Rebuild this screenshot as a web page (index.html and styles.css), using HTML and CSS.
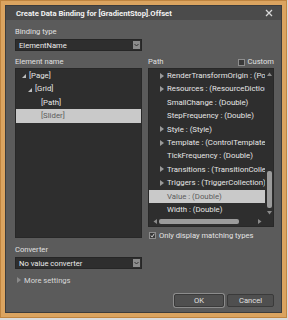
FILE: index.html
```html
<!DOCTYPE html>
<html>
<head>
<meta charset="utf-8">
<link rel="stylesheet" href="styles.css">
</head>
<body>
<div class="window">
  <div class="inner">
    <div class="titlebar">
      <span class="title">Create Data Binding for [GradientStop].Offset</span>
      <svg class="close" width="8" height="8" viewBox="0 0 8 8"><path d="M1 1L7 7M7 1L1 7" stroke="#d8d8d8" stroke-width="1.3"/></svg>
    </div>
    <div class="content">
      <div class="label first">Binding type</div>
      <div class="combo">
        <span>ElementName</span>
        <span class="drop"><svg width="5" height="4" viewBox="0 0 5 4"><path d="M0.5 1L2.5 3L4.5 1" stroke="#333" stroke-width="1" fill="none"/></svg></span>
      </div>
      <div class="cols">
        <div class="col">
          <div class="label">Element name</div>
          <div class="box tree">
            <div class="row l0"><span class="exp"></span>[Page]</div>
            <div class="row l1"><span class="exp"></span>[Grid]</div>
            <div class="row l2">[Path]</div>
            <div class="row l2 sel">[Slider]</div>
          </div>
        </div>
        <div class="col">
          <div class="label pathhead"><span>Path</span><span class="custom"><span class="cb"></span>Custom</span></div>
          <div class="box plist">
            <div class="prows">
              <div class="items">
                <div class="row p"><span class="arr"></span>RenderTransformOrigin : (Point)</div>
                <div class="row p"><span class="arr"></span>Resources : (ResourceDictionary)</div>
                <div class="row p"><span class="noarr"></span>SmallChange : (Double)</div>
                <div class="row p"><span class="noarr"></span>StepFrequency : (Double)</div>
                <div class="row p"><span class="arr"></span>Style : (Style)</div>
                <div class="row p"><span class="arr"></span>Template : (ControlTemplate)</div>
                <div class="row p"><span class="noarr"></span>TickFrequency : (Double)</div>
                <div class="row p"><span class="arr"></span>Transitions : (TransitionCollection)</div>
                <div class="row p"><span class="arr"></span>Triggers : (TriggerCollection)</div>
                <div class="row p sel"><span class="noarr"></span>Value : (Double)</div>
                <div class="row p"><span class="noarr"></span>Width : (Double)</div>
              </div>
              <div class="vscroll">
                <svg class="varrow" width="5" height="4" viewBox="0 0 5 4"><path d="M0 4L2.5 0.5L5 4Z" fill="#8a8a8a"/></svg>
                <div class="vtrack"><div class="vthumb"></div></div>
                <svg class="varrow" width="5" height="4" viewBox="0 0 5 4"><path d="M0 0L2.5 3.5L5 0Z" fill="#8a8a8a"/></svg>
              </div>
            </div>
            <div class="hscroll">
              <svg width="4" height="5" viewBox="0 0 4 5"><path d="M4 0L0.5 2.5L4 5Z" fill="#8a8a8a"/></svg>
              <div class="hthumb"></div>
              <svg width="4" height="5" viewBox="0 0 4 5"><path d="M0 0L3.5 2.5L0 5Z" fill="#8a8a8a"/></svg>
            </div>
          </div>
          <div class="match"><span class="cb checked"><svg width="7" height="7" viewBox="0 0 7 7"><path d="M1 3.5L3 5.5L6 1" stroke="#eee" stroke-width="1.2" fill="none"/></svg></span>Only display matching types</div>
        </div>
      </div>
      <div class="label conv">Converter</div>
      <div class="combo">
        <span>No value converter</span>
        <span class="drop"><svg width="5" height="4" viewBox="0 0 5 4"><path d="M0.5 1L2.5 3L4.5 1" stroke="#333" stroke-width="1" fill="none"/></svg></span>
      </div>
      <div class="more"><span class="arr"></span>More settings</div>
      <div class="buttons">
        <div class="btn ok">OK</div>
        <div class="btn cancel">Cancel</div>
      </div>
    </div>
  </div>
</div>
</body>
</html>
```
FILE: styles.css
```css
html, body {
  margin: 0;
  padding: 0;
  background: #dcdcdc;
}
body {
  font-family: Roboto, "Liberation Sans", sans-serif;
  font-size: 7.6px;
  color: #e4e4e4;
}
.window {
  width: 287px;
  height: 318px;
  box-sizing: border-box;
  border: 5px solid #dba460;
  outline: 1px solid #c08540;
  outline-offset: -1px;
}
.inner {
  height: 100%;
  box-sizing: border-box;
  border: 1px solid #3c3c3c;
  background: #5b5b5b;
  display: flex;
  flex-direction: column;
}
.titlebar {
  height: 14px;
  background: #4b4b4b;
  display: flex;
  align-items: center;
  justify-content: space-between;
  padding: 0 8px 0 10px;
}
.title {
  font-weight: bold;
  color: #f2f2f2;
  font-size: 7.7px;
}
.close {
  display: block;
}
.content {
  padding: 0 7px 0 9px;
  display: flex;
  flex-direction: column;
}
.label {
  height: 12px;
  line-height: 12px;
  color: #e0e0e0;
}
.label.first {
  margin-top: 6px;
}
.combo {
  width: 127px;
  height: 12px;
  box-sizing: border-box;
  margin-top: 1px;
  background: #2e2e2e;
  border: 1px solid #262626;
  display: flex;
  align-items: center;
  justify-content: space-between;
  padding: 0 1px 0 3px;
  color: #ececec;
}
.drop {
  width: 7px;
  height: 8px;
  background: #8c8c8c;
  display: flex;
  align-items: center;
  justify-content: center;
}
.drop svg { display: block; }
.cols {
  display: flex;
  gap: 6px;
  margin-top: 5px;
}
.col {
  display: flex;
  flex-direction: column;
}
.col:first-child { width: 127px; }
.col:last-child { width: 126px; }
.box {
  background: #2e2e2e;
  border: 1px solid #282828;
  box-sizing: border-box;
}
.tree {
  height: 170px;
}
.row {
  height: 13.4px;
  line-height: 13.4px;
  white-space: nowrap;
  overflow: hidden;
  display: flex;
  align-items: center;
  color: #e6e6e6;
  font-size: 7.8px;
}
.row.sel {
  background: #c9c9c9;
  color: #5c5c5c;
}
.l0 { padding-left: 6px; }
.l1 { padding-left: 12px; }
.l2 { padding-left: 25px; }
.exp {
  width: 0;
  height: 0;
  border-left: 4px solid transparent;
  border-bottom: 4px solid #bdbdbd;
  margin-right: 3px;
  margin-top: 1px;
}
.pathhead {
  display: flex;
  justify-content: space-between;
  align-items: center;
}
.custom {
  display: flex;
  align-items: center;
}
.cb {
  width: 7px;
  height: 7px;
  box-sizing: border-box;
  border: 1px solid #8e8e8e;
  background: #3a3a3a;
  margin-right: 3px;
  display: flex;
  align-items: center;
  justify-content: center;
}
.cb svg { display: block; }
.plist {
  height: 159px;
  display: flex;
  flex-direction: column;
}
.prows {
  display: flex;
  height: 148px;
}
.items {
  flex: 1;
  min-width: 0;
  overflow: hidden;
}
.row.p {
  padding-left: 11px;
}
.arr {
  width: 0;
  height: 0;
  border-top: 3px solid transparent;
  border-bottom: 3px solid transparent;
  border-left: 4px solid #9a9a9a;
  margin-right: 3px;
  flex: none;
}
.noarr {
  width: 4px;
  margin-right: 3px;
  flex: none;
}
.vscroll {
  width: 8px;
  display: flex;
  flex-direction: column;
  align-items: center;
  padding: 3px 0 2px;
  box-sizing: border-box;
}
.varrow { display: block; flex: none; }
.vtrack {
  flex: 1;
  width: 100%;
  display: flex;
  flex-direction: column;
  justify-content: flex-end;
  align-items: center;
  padding-bottom: 3px;
}
.vthumb {
  width: 5px;
  height: 37px;
  border-radius: 2px;
  background: #9b9b9b;
}
.hscroll {
  height: 9px;
  display: flex;
  align-items: center;
  padding-left: 4px;
  width: 112px;
  gap: 2px;
}
.hscroll svg { display: block; flex: none; }
.hthumb {
  width: 80px;
  height: 5px;
  border-radius: 2px;
  background: #9b9b9b;
  margin-right: 17px;
}
.match {
  margin-top: 4px;
  display: flex;
  align-items: center;
  height: 9px;
}
.cb.checked {
  margin-left: 1px;
  margin-right: 3px;
}
.conv {
  margin-top: 4px;
}
.more {
  margin-top: 5px;
  height: 12px;
  display: flex;
  align-items: center;
  padding-left: 2px;
  color: #d8d8d8;
}
.more .arr {
  border-left-color: #8a8a8a;
  margin-right: 3px;
}
.buttons {
  margin-top: 8px;
  display: flex;
  justify-content: flex-end;
  gap: 3px;
}
.btn {
  height: 13px;
  box-sizing: border-box;
  background: #4f4f4f;
  border: 1px solid #3a3a3a;
  border-radius: 2px;
  display: flex;
  align-items: center;
  justify-content: center;
  color: #e0e0e0;
}
.ok {
  width: 50px;
  box-shadow: 0 0 0 1px #8c8c8c;
}
.cancel { width: 47px; }
```
